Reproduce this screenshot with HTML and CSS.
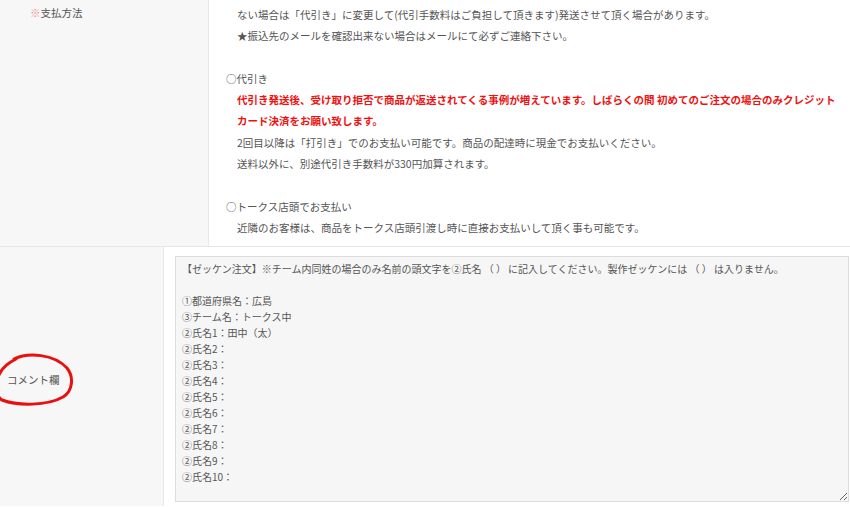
FILE: index.html
```html
<!DOCTYPE html>
<html lang="ja">
<head>
  <meta charset="UTF-8">
  <title>ご注文手続き</title>
  <link rel="stylesheet" href="styles.css">
</head>
<body>

  <div class="form-row pay-row">
    <div class="form-head">
      <span class="req">※</span>支払方法
    </div>
    <div class="form-body">
      <div class="note">ない場合は「代引き」に変更して(代引手数料はご負担して頂きます)発送させて頂く場合があります。</div>
      <div class="note">★振込先のメールを確認出来ない場合はメールにて必ずご連絡下さい。</div>
      <div class="blank"></div>

      <div class="method">○代引き</div>
      <div class="note warn">代引き発送後、受け取り拒否で商品が返送されてくる事例が増えています。しばらくの間 初めてのご注文の場合のみクレジット<br>カード決済をお願い致します。</div>
      <div class="note">2回目以降は「打引き」でのお支払い可能です。商品の配達時に現金でお支払いください。</div>
      <div class="note">送料以外に、別途代引き手数料が330円加算されます。</div>
      <div class="blank"></div>

      <div class="method">○トークス店頭でお支払い</div>
      <div class="note">近隣のお客様は、商品をトークス店頭引渡し時に直接お支払いして頂く事も可能です。</div>
    </div>
  </div>

  <div class="form-row comment-row">
    <div class="form-head">
      <span class="circled">
        コメント欄
        <svg class="mark" width="84" height="62" viewBox="0 0 84 62">
          <path d="M22 8 C36 1 62 3 75 17 C82 26 81 40 71 46 C55 55 26 55 10 49 C3 45 3 30 8 22 C11 16 16 12 24 8" fill="none" stroke="#e8110f" stroke-width="3" stroke-linecap="round"/>
        </svg>
      </span>
    </div>
    <div class="form-body">
      <textarea class="comment-box" rows="14">【ゼッケン注文】※チーム内同姓の場合のみ名前の頭文字を②氏名 （ ） に記入してください。製作ゼッケンには （ ） は入りません。

①都道府県名：広島
③チーム名：トークス中
②氏名1：田中（太）
②氏名2：
②氏名3：
②氏名4：
②氏名5：
②氏名6：
②氏名7：
②氏名8：
②氏名9：
②氏名10：</textarea>
    </div>
  </div>

</body>
</html>
```

FILE: styles.css
```css
body {
  margin: 0;
  font-family: "Noto Sans CJK JP", "Noto Sans", sans-serif;
  font-size: 10.5px;
  color: #555;
  background-color: #fff;
}

.form-row {
  display: flex;
}

.form-head {
  box-sizing: border-box;
  background-color: #f7f7f7;
  border-right: 1px solid #e8e8e8;
}

.form-body {
  flex: 1;
  box-sizing: border-box;
}

/* 支払方法 */
.pay-row {
  border-bottom: 1px solid #e6e6e6;
}

.pay-row .form-head {
  width: 209px;
  padding: 2px 0 0 30px;
  line-height: 21.3px;
}

.req {
  color: #f08a8a;
}

.pay-row .form-body {
  padding: 4px 0 8px 17px;
  line-height: 21.3px;
}

.note {
  padding-left: 11px;
}

.blank {
  height: 21.3px;
}

.warn {
  color: #ee1111;
  font-weight: bold;
}

/* コメント欄 */
.comment-row {
  height: 259px;
}

.comment-row .form-head {
  width: 164px;
  display: flex;
  align-items: center;
  padding: 6px 0 0 7px;
}

.circled {
  position: relative;
}

.mark {
  position: absolute;
  left: -15px;
  top: -21px;
}

.comment-row .form-body {
  padding: 9px 1px 5px 11px;
}

.comment-box {
  display: block;
  box-sizing: border-box;
  width: 100%;
  height: 246px;
  margin: 0;
  padding: 4px 6px;
  border: 1px solid #dcdcdc;
  border-radius: 0;
  background-color: #f6f6f6;
  font-family: "Noto Sans CJK JP", "Noto Sans", sans-serif;
  font-size: 10px;
  line-height: 16px;
  color: #555;
  outline: none;
}
```
